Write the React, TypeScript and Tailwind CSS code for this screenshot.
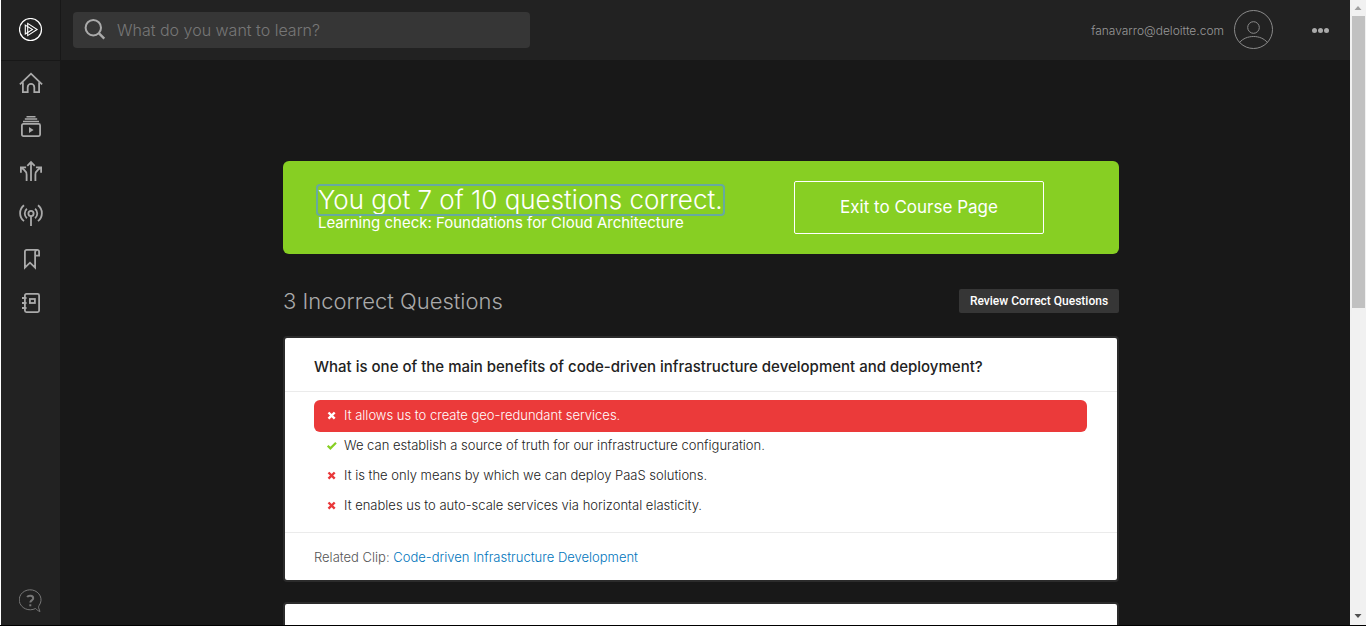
import React from "react";

const iconProps = {
  viewBox: "0 0 24 24",
  fill: "none",
  stroke: "currentColor",
  strokeWidth: 1.8,
  "aria-hidden": true,
} as const;

function LogoIcon() {
  return (
    <svg className="size-6 text-white" {...iconProps} strokeWidth={1.1}>
      <circle cx="11.5" cy="11.5" r="11" strokeWidth={1.2} />
      <path d="M8.7 5.4 18.1 11.5 8.7 17.6Z" />
      <path d="M6.3 7.1 13.5 11.5 6.3 15.9Z" />
    </svg>
  );
}

function HomeIcon() {
  return (
    <svg className="size-6" {...iconProps}>
      <path d="M.9 13.3 12 2.7l11.1 10.6" />
      <path d="M3.9 11.3V21.1h4.800V16.2a3.300 3.300 0 0 1 6.600 0V21.1h4.800V11.3" />
    </svg>
  );
}

function LibraryIcon() {
  return (
    <svg className="size-6" {...iconProps}>
      <rect x="2.9" y="8.9" width="18.2" height="12.2" rx="1.5" />
      <path d="M4 6.500h16M5.800 4h12.400M7.500 1.700h9" strokeWidth={1.4} />
      <path d="M10 12v6l4.600-3Z" fill="currentColor" stroke="none" />
    </svg>
  );
}

function PathsIcon() {
  return (
    <svg className="size-6" {...iconProps}>
      <path d="M12 22V3.500M8.300 6.800 12 3.100l3.700 3.700" />
      <path d="M7.600 22v-6.200c0-2.400-.9-3.600-2.600-5L2.200 8.600M1.900 13.700V8.400h5.200" />
      <path d="M16.400 22v-6.200c0-2.400.9-3.600 2.600-5l2.800-2.200M22.100 13.700V8.400h-5.200" />
    </svg>
  );
}

function ChannelsIcon() {
  return (
    <svg className="size-6" {...iconProps}>
      <circle cx="12" cy="10.5" r="2.6" />
      <path d="M12 13.100V23" />
      <path d="M7.900 15.200a6.200 6.200 0 0 1 0-9.400M16.100 15.200a6.200 6.200 0 0 0 0-9.400" />
      <path d="M5 18.100a10 10 0 0 1 0-15.800M19 18.100a10 10 0 0 0 0-15.800" />
    </svg>
  );
}

function BookmarkIcon() {
  return (
    <svg className="size-6" {...iconProps}>
      <path d="M16.100 8.600h4V4.700a1.800 1.800 0 0 0-1.800-1.800a2.200 2.200 0 0 0-2.200 2.200V20.700l-5.100-5-5.100 5V4.700a1.800 1.800 0 0 1 1.800-1.800H18.300" />
    </svg>
  );
}

function NotebookIcon() {
  return (
    <svg className="size-6" {...iconProps}>
      <rect x="5.9" y="2.9" width="14.2" height="18.2" rx="1.5" />
      <rect x="10.9" y="8" width="5" height="4" />
      <path d="M3 7h4.500M3 12h4.500M3 17h4.500" />
    </svg>
  );
}

function HelpIcon() {
  return (
    <svg className="size-6" {...iconProps} strokeWidth={1}>
      <path d="M16.500 19.500A10.900 10 0 1 1 20.300 16.200c-.7 1-.9 1.800-.6 2.900l1.300 3.400c-1.600-.4-3-1.600-4.500-3Z" />
      <path d="M8.200 8.200c.9-2 6-2.200 6 1 0 2.200-2.900 2.200-2.900 4.400" strokeWidth={2} />
      <path d="M10.300 15.300h2v2h-2z" fill="currentColor" stroke="none" />
    </svg>
  );
}

function SearchIcon() {
  return (
    <svg className="size-6 shrink-0 text-[#aaaaaa]" {...iconProps} strokeWidth={2}>
      <circle cx="10.3" cy="9.7" r="7.7" />
      <path d="m15.800 15.200 5.500 5.500" strokeWidth={2.4} />
    </svg>
  );
}

function AvatarIcon() {
  return (
    <svg className="size-10" viewBox="0 0 40 40" fill="none" stroke="currentColor" strokeWidth={1} aria-hidden>
      <circle cx="19.5" cy="19.5" r="19" />
      <circle cx="19.5" cy="17.5" r="5.8" />
      <path d="M5.500 32.500c3.500-4 8.400-6 14-6s10.500 2 14 6" />
    </svg>
  );
}

function CrossMark() {
  return (
    <svg className="size-3 shrink-0" viewBox="0 0 12 12" stroke="currentColor" strokeWidth={2.4} aria-label="Incorrect" role="img">
      <path d="m2.500 2.500 6.200 6.200M8.700 2.500 2.500 8.700" />
    </svg>
  );
}

function CheckMark() {
  return (
    <svg className="size-3 shrink-0 text-[#87cf23]" viewBox="0 0 12 12" fill="none" stroke="currentColor" strokeWidth={2.2} aria-label="Correct" role="img">
      <path d="m1.700 5.700 2.700 2.700 5.600-5.600" />
    </svg>
  );
}

const navItems = [
  { label: "Home", Icon: HomeIcon },
  { label: "Browse", Icon: LibraryIcon },
  { label: "Paths", Icon: PathsIcon },
  { label: "Channels", Icon: ChannelsIcon },
  { label: "Bookmarks", Icon: BookmarkIcon },
  { label: "Notes", Icon: NotebookIcon },
];

const answers = [
  { text: "It allows us to create geo-redundant services.", correct: false, chosen: true },
  { text: "We can establish a source of truth for our infrastructure configuration.", correct: true, chosen: false },
  { text: "It is the only means by which we can deploy PaaS solutions.", correct: false, chosen: false },
  { text: "It enables us to auto-scale services via horizontal elasticity.", correct: false, chosen: false },
];

function Sidebar() {
  return (
    <nav className="flex w-[60px] shrink-0 flex-col border-l border-white bg-[#222222] text-[#aaaaaa]" aria-label="Main">
      <a href="#" aria-label="Dashboard" className="flex h-[61px] shrink-0 items-center justify-center border-b border-[#181818]">
        <LogoIcon />
      </a>
      <ul className="flex flex-col">
        {navItems.map(({ label, Icon }) => (
          <li key={label}>
            <a href="#" aria-label={label} className="flex h-11 items-center justify-center">
              <Icon />
            </a>
          </li>
        ))}
      </ul>
      <button type="button" aria-label="Help" className="mt-auto mb-3 flex items-center justify-center text-[#777777]">
        <HelpIcon />
      </button>
    </nav>
  );
}

function Header() {
  return (
    <header className="flex h-[60px] shrink-0 items-center border-l border-[#181818] bg-[#222222] pl-3 pr-[21px]">
      <label className="flex h-9 w-[457px] items-center gap-2.5 rounded-sm bg-[#363636] pl-2.5">
        <SearchIcon />
        <input
          type="search"
          aria-label="Search"
          placeholder="What do you want to learn?"
          className="min-w-0 flex-1 bg-transparent text-base font-light text-[#cccccc] outline-none placeholder:text-[#777777]"
        />
      </label>
      <div className="ml-auto flex items-center">
        <span className="pt-0.5 text-xs font-light text-[#999999]">fanavarro@deloitte.com</span>
        <button type="button" aria-label="Account" className="ml-2.5 text-[#8a8a8a]">
          <AvatarIcon />
        </button>
        <button type="button" aria-label="More" className="ml-[38px] flex gap-px">
          <span className="size-[5px] rounded-full bg-[#aaaaaa]" />
          <span className="size-[5px] rounded-full bg-[#aaaaaa]" />
          <span className="size-[5px] rounded-full bg-[#aaaaaa]" />
        </button>
      </div>
    </header>
  );
}

function Scrollbar() {
  return (
    <div className="flex w-4 shrink-0 flex-col items-center bg-[#f1f1f1]" aria-hidden>
      <svg className="size-4 shrink-0 text-[#a0a0a0]" viewBox="0 0 16 16" fill="currentColor">
        <path d="M4.500 10h7L8 6Z" />
      </svg>
      <div className="h-[292px] w-[13px] bg-[#c1c1c1]" />
      <svg className="mt-auto size-4 shrink-0 text-[#505050]" viewBox="0 0 16 16" fill="currentColor">
        <path d="M4.500 5h7L8 9Z" />
      </svg>
    </div>
  );
}

function QuestionCard() {
  return (
    <article className="rounded-sm border-2 border-[#2b2b2b] bg-white">
      <h3 className="border-b border-[#ebebeb] px-[29px] pt-[19px] pb-3.5 text-[15px] leading-5 font-medium text-[#222222]">
        What is one of the main benefits of code-driven infrastructure development and deployment?
      </h3>
      <ul className="pt-2 pr-[30px] pb-2.5 pl-[29px] text-[13px] font-light text-[#222222]">
        {answers.map((answer) => (
          <li
            key={answer.text}
            className={
              answer.chosen
                ? "flex h-8 items-center gap-1.5 rounded-md bg-[#eb3a3a] pl-3 text-white"
                : "flex h-[30px] items-center gap-1.5 pb-0.5 pl-3"
            }
          >
            <span className={answer.chosen ? "text-white" : "text-[#e9383a]"}>
              {answer.correct ? <CheckMark /> : <CrossMark />}
            </span>
            {answer.text}
          </li>
        ))}
      </ul>
      <p className="border-t border-[#ebebeb] px-[29px] pt-3.5 pb-[13px] text-[13px] leading-5 font-light text-[#555555]">
        Related Clip:{" "}
        <a href="#" className="text-[#0075bc]">
          Code-driven Infrastructure Development
        </a>
      </p>
    </article>
  );
}

export default function App() {
  return (
    <div className="flex h-screen overflow-hidden border-b border-black bg-[#181818] font-['Inter',sans-serif]">
      <Sidebar />
      <div className="flex min-w-0 flex-1 flex-col">
        <Header />
        <main className="min-h-0 flex-1 overflow-hidden pt-[101px] pr-2">
          <div className="mx-auto max-w-[836px]">
            <section className="flex items-center rounded-md bg-[#87cf23] py-5 pr-[75px] pl-[35px] text-white">
              <div className="pt-0.5">
                <h1 className="w-fit rounded-xs text-[26px] leading-7 font-light outline-2 outline-[#67a9a0]">
                  You got 7 of 10 questions correct.
                </h1>
                <p className="text-[15px] leading-[18px]">Learning check: Foundations for Cloud Architecture</p>
              </div>
              <a href="#" className="ml-auto flex h-[53px] w-[250px] items-center justify-center rounded-xs border border-white text-[17px]">
                Exit to Course Page
              </a>
            </section>
            <div className="mt-[35px] mb-[23px] flex items-center justify-between">
              <h2 className="text-[22px] leading-6 font-light text-[#aaaaaa]">3 Incorrect Questions</h2>
              <button type="button" className="h-6 w-40 rounded-xs bg-[#363636] font-['Roboto',sans-serif] text-xs font-medium text-white">
                Review Correct Questions
              </button>
            </div>
            <div className="flex flex-col gap-5">
              <QuestionCard />
              <article className="h-[246px] rounded-sm border-2 border-[#2b2b2b] bg-white" />
            </div>
          </div>
        </main>
      </div>
      <Scrollbar />
    </div>
  );
}
